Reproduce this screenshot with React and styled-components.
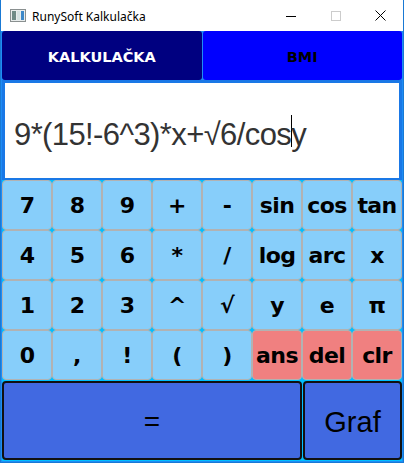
import React from 'react';
import styled, { createGlobalStyle } from 'styled-components';

const GlobalStyle = createGlobalStyle`
  html, body {
    margin: 0;
    padding: 0;
    background: #ffffff;
  }
  * {
    box-sizing: border-box;
  }
`;

const Window = styled.div`
  width: 404px;
  height: 463px;
  display: flex;
  flex-direction: column;
  border: 1px solid #1979d4;
  border-top: none;
  background: #ffffff;
`;

const TitleBar = styled.div`
  height: 31px;
  display: flex;
  align-items: center;
  background: #ffffff;
  font-family: "Noto Sans", "Open Sans", sans-serif;
  font-size: 12px;
  color: #000000;
`;

const AppIcon = styled.div`
  width: 16px;
  height: 16px;
  margin: 0 6px 0 9px;
  display: flex;
  align-items: center;
`;

const Title = styled.div`
  flex: 1;
  padding-top: 1px;
`;

const CaptionButton = styled.div`
  width: 45px;
  height: 30px;
  display: flex;
  align-items: center;
  justify-content: center;
`;

const Content = styled.div`
  flex: 1;
  display: flex;
  flex-direction: column;
  background: #1e8cf5;
  padding: 0 1px 1px 1px;
`;

const TabRow = styled.div`
  height: 49px;
  display: flex;
  gap: 1px;
`;

const Tab = styled.div`
  flex: 1;
  display: flex;
  align-items: center;
  justify-content: center;
  border-radius: 3px;
  background: ${p => (p.active ? '#000080' : '#0000ff')};
  color: ${p => (p.active ? '#ffffff' : '#000000')};
  font-family: "DejaVu Sans", Verdana, sans-serif;
  font-weight: bold;
  font-size: 14.5px;
  padding-top: 2px;
`;

const Display = styled.div`
  height: 100px;
  border: 3px solid #1a78e6;
  border-bottom-width: 2px;
  background: #ffffff;
  display: flex;
  align-items: center;
  padding: 6px 0 0 9px;
  font-family: "Liberation Sans", Arial, sans-serif;
  font-size: 31px;
  letter-spacing: -0.6px;
  color: #333333;
  white-space: nowrap;
  overflow: hidden;
`;

const Caret = styled.span`
  display: inline-block;
  width: 1px;
  height: 32px;
  margin-right: -1px;
  background: #000000;
  vertical-align: -2px;
`;

const Keypad = styled.div`
  display: grid;
  grid-template-columns: repeat(8, 50px);
  grid-auto-rows: 50px;
  background: #00bfff;
`;

const Key = styled.div`
  display: flex;
  align-items: center;
  justify-content: center;
  border: 1px solid #b2b2b2;
  border-radius: 4px;
  background: ${p => (p.danger ? '#f08080' : '#87cefa')};
  color: #000000;
  font-family: "DejaVu Sans", Verdana, sans-serif;
  font-weight: bold;
  font-size: 22px;
  letter-spacing: -0.6px;
`;

const BottomRow = styled.div`
  flex: 1;
  display: grid;
  grid-template-columns: 300px 100px;
  background: #00bfff;
  padding: 1px 0;
`;

const BigButton = styled.div`
  display: flex;
  align-items: center;
  justify-content: center;
  border: 2px solid #111111;
  border-radius: 4px;
  background: #4169e1;
  color: #000000;
  font-family: "Liberation Sans", Arial, sans-serif;
  font-size: ${p => p.size || 29}px;
  margin-left: ${p => (p.inset ? 1 : 0)}px;
  padding-top: 3px;
`;

const keys = [
  '7', '8', '9', '+', '-', 'sin', 'cos', 'tan',
  '4', '5', '6', '*', '/', 'log', 'arc', 'x',
  '1', '2', '3', '^', '√', 'y', 'e', 'π',
  '0', ',', '!', '(', ')', 'ans', 'del', 'clr',
];

const danger = ['ans', 'del', 'clr'];

const App = () => (
  <>
    <GlobalStyle />
    <Window>
      <TitleBar>
        <AppIcon>
          <svg width="16" height="13" viewBox="0 0 16 13">
            <rect x="0.5" y="0.5" width="15" height="12" fill="#e8ecec" stroke="#8a9090" />
            <rect x="2" y="2" width="4" height="9" fill="#6f8a86" />
            <rect x="7" y="2" width="3" height="9" fill="#d6e2e2" />
            <rect x="11" y="2" width="3" height="9" fill="#3d88c8" />
          </svg>
        </AppIcon>
        <Title>RunySoft Kalkulačka</Title>
        <CaptionButton>
          <svg width="10" height="10" viewBox="0 0 10 10">
            <line x1="0" y1="5.5" x2="10" y2="5.5" stroke="#000" strokeWidth="1" />
          </svg>
        </CaptionButton>
        <CaptionButton>
          <svg width="10" height="10" viewBox="0 0 10 10">
            <rect x="0.5" y="0.5" width="9" height="9" fill="none" stroke="#cccccc" strokeWidth="1" />
          </svg>
        </CaptionButton>
        <CaptionButton>
          <svg width="11" height="11" viewBox="0 0 11 11">
            <path d="M0.5 0.5 L10.5 10.5 M10.5 0.5 L0.5 10.5" stroke="#000" strokeWidth="1" />
          </svg>
        </CaptionButton>
      </TitleBar>
      <Content>
        <TabRow>
          <Tab active>KALKULAČKA</Tab>
          <Tab>BMI</Tab>
        </TabRow>
        <Display>
          <span>
            9*(15!-6^3)*x+√6/cos<Caret />y
          </span>
        </Display>
        <Keypad>
          {keys.map(k => (
            <Key key={k} danger={danger.includes(k)}>
              {k}
            </Key>
          ))}
        </Keypad>
        <BottomRow>
          <BigButton size={28}>=</BigButton>
          <BigButton inset>Graf</BigButton>
        </BottomRow>
      </Content>
    </Window>
  </>
);

export default App;
